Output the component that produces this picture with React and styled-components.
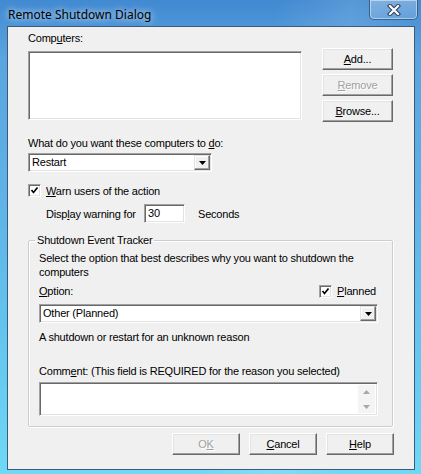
import React from 'react';
import styled, { createGlobalStyle } from 'styled-components';

const GlobalStyle = createGlobalStyle`
  html, body {
    margin: 0;
    padding: 0;
  }
  body {
    font-family: "Liberation Sans", Arial, sans-serif;
    font-size: 11px;
    letter-spacing: -0.2px;
    color: #000;
    background: #fff;
  }
  * {
    box-sizing: border-box;
  }
`;

const Window = styled.div`
  width: 421px;
  height: 474px;
  display: flex;
  flex-direction: column;
  background:
    linear-gradient(100deg, rgba(255, 255, 255, 0) 55%, rgba(255, 255, 255, 0.12) 70%, rgba(255, 255, 255, 0) 85%),
    linear-gradient(180deg, #4189d1 0%, #5aa4e0 12%, #5fb4e8 45%, #66cbf1 80%, #6fd8f7 100%);
`;

const TitleBar = styled.div`
  height: 28px;
  display: flex;
  justify-content: space-between;
  align-items: flex-start;
  padding-left: 8px;
`;

const Title = styled.div`
  font-family: "Noto Sans", "Open Sans", sans-serif;
  font-size: 12px;
  letter-spacing: 0;
  line-height: 16px;
  padding-top: 7px;
  color: #000;
  text-shadow: 0 0 6px rgba(255, 255, 255, 0.7), 0 0 10px rgba(255, 255, 255, 0.5);
`;

const CloseButton = styled.div`
  width: 49px;
  height: 20px;
  margin-right: 3px;
  display: flex;
  align-items: center;
  justify-content: center;
  border: 1px solid rgba(40, 70, 110, 0.75);
  border-top: none;
  border-radius: 0 0 5px 5px;
  background: linear-gradient(180deg, rgba(255, 255, 255, 0.28), rgba(255, 255, 255, 0.12));
  box-shadow: inset 0 0 0 1px rgba(255, 255, 255, 0.45);
`;

const Client = styled.div`
  flex: 1;
  margin: 0 6px 4px 7px;
  border: 1px solid #3f5a76;
  background: #f0f0f0;
  padding: 0 21px 14px 20px;
  display: flex;
  flex-direction: column;
`;

const Mn = styled.u`
  text-decoration: underline;
  text-underline-offset: 1px;
`;

const Label = styled.div`
  line-height: ${(p) => p.$lh || 13}px;
  margin-top: ${(p) => p.$mt || 0}px;
  white-space: nowrap;
`;

const TopRow = styled.div`
  display: flex;
  justify-content: space-between;
  align-items: flex-start;
`;

const ListColumn = styled.div`
  padding-top: 5px;
`;

const sunken = `
  border: 1px solid;
  border-color: #a0a0a0 #ffffff #ffffff #a0a0a0;
  box-shadow: inset 1px 1px 0 #696969, inset -1px -1px 0 #e3e3e3;
  background: #fff;
`;

const ListBox = styled.div`
  ${sunken}
  margin-top: 6px;
  width: 274px;
  height: 69px;
`;

const ButtonStack = styled.div`
  display: flex;
  flex-direction: column;
  gap: 4px;
  padding-top: 21px;
`;

const Button = styled.div`
  width: ${(p) => p.$w || 71}px;
  height: 22px;
  display: flex;
  align-items: center;
  justify-content: center;
  border: 1px solid;
  border-color: #ffffff #696969 #696969 #ffffff;
  box-shadow: inset -1px -1px 0 #a0a0a0, inset 1px 1px 0 #e3e3e3;
  background: #f0f0f0;
  color: ${(p) => (p.$disabled ? '#a0a0a0' : '#000')};
  text-shadow: ${(p) => (p.$disabled ? '1px 1px 0 #fff' : 'none')};
  padding-bottom: 1px;
`;

const Combo = styled.div`
  ${sunken}
  margin-top: ${(p) => p.$mt || 0}px;
  width: ${(p) => (p.$w ? `${p.$w}px` : '100%')};
  height: 19px;
  display: flex;
  align-items: stretch;
  padding: 1px;
`;

const ComboText = styled.div`
  flex: 1;
  padding-left: 2px;
  line-height: 15px;
`;

const DropButton = styled.div`
  width: 16px;
  display: flex;
  align-items: center;
  justify-content: center;
  border: 1px solid;
  border-color: #e3e3e3 #696969 #696969 #e3e3e3;
  box-shadow: inset -1px -1px 0 #a0a0a0, inset 1px 1px 0 #fff;
  background: #f0f0f0;
`;

const CheckRow = styled.div`
  margin-top: ${(p) => p.$mt || 0}px;
  display: flex;
  align-items: center;
  gap: 5px;
  height: 13px;
`;

const CheckBox = styled.div`
  ${sunken}
  width: 13px;
  height: 13px;
  display: flex;
  align-items: center;
  justify-content: center;
`;

const WarningRow = styled.div`
  margin-top: 7px;
  padding-left: 18px;
  display: flex;
  align-items: center;
`;

const WarningLabel = styled.span`
  width: 98px;
`;

const SmallEdit = styled.div`
  ${sunken}
  width: 41px;
  height: 19px;
  padding-left: 3px;
  line-height: 17px;
`;

const Seconds = styled.span`
  margin-left: 13px;
`;

const GroupBox = styled.fieldset`
  margin: 10px 0 0 0;
  padding: 4px 14px 10px 10px;
  border: 1px solid #cdcdcd;
  border-radius: 2px;
  box-shadow: 1px 1px 0 #fff, inset 1px 1px 0 #fff;
  min-width: 0;
`;

const Legend = styled.legend`
  padding: 0 2px;
  margin-left: -4px;
  line-height: 14px;
`;

const Paragraph = styled.div`
  line-height: 14px;
  margin-top: ${(p) => p.$mt || 0}px;
  width: ${(p) => (p.$w ? `${p.$w}px` : 'auto')};
`;

const OptionRow = styled.div`
  margin-top: 5px;
  height: 14px;
  display: flex;
  justify-content: space-between;
  align-items: center;
  padding-right: 2px;
`;

const CommentBox = styled.div`
  ${sunken}
  margin-top: 4px;
  height: 34px;
  display: flex;
  justify-content: flex-end;
  padding: 2px;
`;

const ScrollTrack = styled.div`
  width: 17px;
  display: flex;
  flex-direction: column;
  justify-content: space-between;
  align-items: center;
  padding: 5px 0 4px;
  background: #f4f4f4;
`;

const Footer = styled.div`
  margin-top: 6px;
  margin-right: -1px;
  display: flex;
  justify-content: flex-end;
  gap: 9px;
`;

const ArrowDown = ({ color = '#000' }) => (
  <svg width="7" height="4" viewBox="0 0 7 4">
    <polygon points="0,0 7,0 3.5,4" fill={color} />
  </svg>
);

const ArrowUp = ({ color = '#000' }) => (
  <svg width="7" height="4" viewBox="0 0 7 4">
    <polygon points="0,4 7,4 3.5,0" fill={color} />
  </svg>
);

const CheckMark = () => (
  <svg width="9" height="9" viewBox="0 0 9 9">
    <polyline points="1.5,4 3.5,6.5 7.5,1.5" fill="none" stroke="#000" strokeWidth="1.7" />
  </svg>
);

const CloseGlyph = () => (
  <svg width="14" height="12" viewBox="0 0 14 12">
    <path d="M3 2 L11 10 M11 2 L3 10" stroke="#2b3f5c" strokeWidth="4.2" strokeLinecap="square" />
    <path d="M3 2 L11 10 M11 2 L3 10" stroke="#ffffff" strokeWidth="2.2" strokeLinecap="square" />
  </svg>
);

const App = () => {
  return (
    <>
      <GlobalStyle />
      <Window>
        <TitleBar>
          <Title>Remote Shutdown Dialog</Title>
          <CloseButton>
            <CloseGlyph />
          </CloseButton>
        </TitleBar>

        <Client>
          <TopRow>
            <ListColumn>
              <Label>
                Comp<Mn>u</Mn>ters:
              </Label>
              <ListBox />
            </ListColumn>
            <ButtonStack>
              <Button>
                <span><Mn>A</Mn>dd...</span>
              </Button>
              <Button $disabled>
                <span><Mn>R</Mn>emove</span>
              </Button>
              <Button>
                <span><Mn>B</Mn>rowse...</span>
              </Button>
            </ButtonStack>
          </TopRow>

          <Label $mt={15}>
            What do you want these computers to <Mn>d</Mn>o:
          </Label>
          <Combo $mt={3} $w={184}>
            <ComboText>Restart</ComboText>
            <DropButton>
              <ArrowDown />
            </DropButton>
          </Combo>

          <CheckRow $mt={12}>
            <CheckBox>
              <CheckMark />
            </CheckBox>
            <span><Mn>W</Mn>arn users of the action</span>
          </CheckRow>

          <WarningRow>
            <WarningLabel>
              Disp<Mn>l</Mn>ay warning for
            </WarningLabel>
            <SmallEdit>30</SmallEdit>
            <Seconds>Seconds</Seconds>
          </WarningRow>

          <GroupBox>
            <Legend>Shutdown Event Tracker</Legend>
            <Paragraph $w={345}>
              Select the option that best describes why you want to shutdown the computers
            </Paragraph>
            <OptionRow>
              <span><Mn>O</Mn>ption:</span>
              <CheckRow>
                <CheckBox>
                  <CheckMark />
                </CheckBox>
                <span><Mn>P</Mn>lanned</span>
              </CheckRow>
            </OptionRow>
            <Combo $mt={6}>
              <ComboText>Other (Planned)</ComboText>
              <DropButton>
                <ArrowDown />
              </DropButton>
            </Combo>
            <Paragraph $mt={7}>A shutdown or restart for an unknown reason</Paragraph>
            <Paragraph $mt={20}>
              Comm<Mn>e</Mn>nt: (This field is REQUIRED for the reason you selected)
            </Paragraph>
            <CommentBox>
              <ScrollTrack>
                <ArrowUp color="#a8a8a8" />
                <ArrowDown color="#a8a8a8" />
              </ScrollTrack>
            </CommentBox>
          </GroupBox>

          <Footer>
            <Button $w={68} $disabled>
              <span>O<Mn>K</Mn></span>
            </Button>
            <Button $w={68}>
              <span><Mn>C</Mn>ancel</span>
            </Button>
            <Button $w={68}>
              <span><Mn>H</Mn>elp</span>
            </Button>
          </Footer>
        </Client>
      </Window>
    </>
  );
};

export default App;
